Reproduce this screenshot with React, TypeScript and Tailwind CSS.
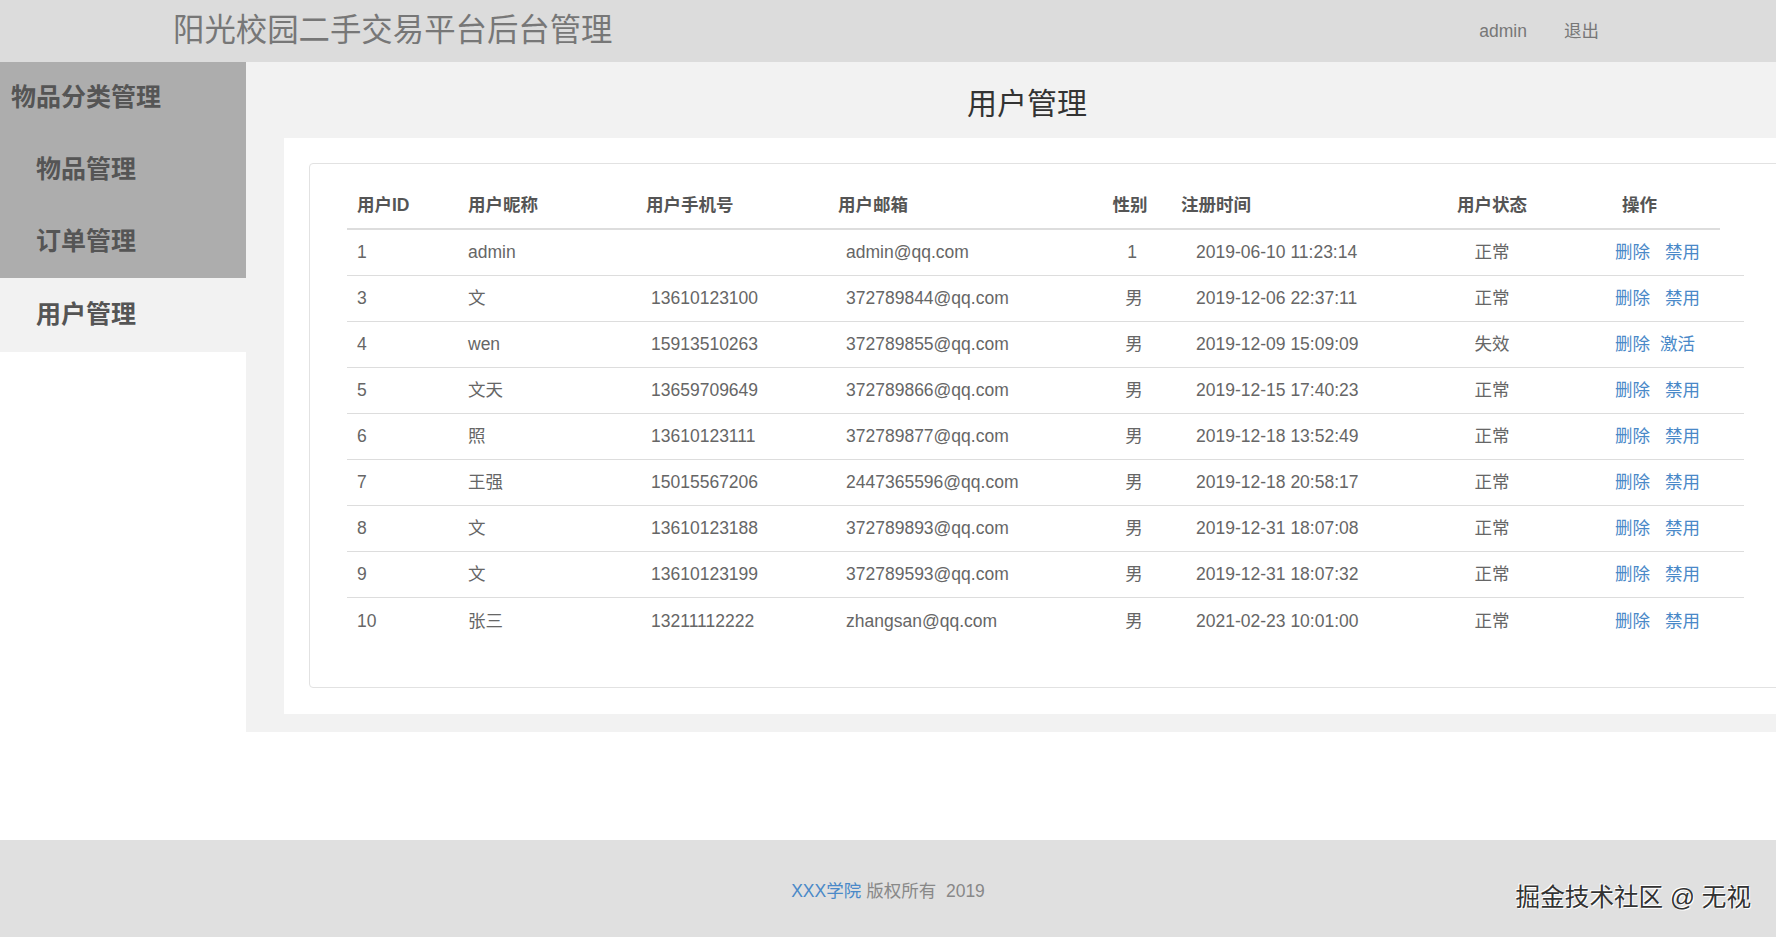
import React from 'react'

// Campus second-hand market admin: user management page.

type User = {
  id: string
  nick: string
  phone: string
  email: string
  gender: string
  created: string
  status: string
  action: string
}

const users: User[] = [
  { id: '1', nick: 'admin', phone: '', email: 'admin@qq.com', gender: '1', created: '2019-06-10 11:23:14', status: '正常', action: '禁用' },
  { id: '3', nick: '文', phone: '13610123100', email: '372789844@qq.com', gender: '男', created: '2019-12-06 22:37:11', status: '正常', action: '禁用' },
  { id: '4', nick: 'wen', phone: '15913510263', email: '372789855@qq.com', gender: '男', created: '2019-12-09 15:09:09', status: '失效', action: '激活' },
  { id: '5', nick: '文天', phone: '13659709649', email: '372789866@qq.com', gender: '男', created: '2019-12-15 17:40:23', status: '正常', action: '禁用' },
  { id: '6', nick: '照', phone: '13610123111', email: '372789877@qq.com', gender: '男', created: '2019-12-18 13:52:49', status: '正常', action: '禁用' },
  { id: '7', nick: '王强', phone: '15015567206', email: '2447365596@qq.com', gender: '男', created: '2019-12-18 20:58:17', status: '正常', action: '禁用' },
  { id: '8', nick: '文', phone: '13610123188', email: '372789893@qq.com', gender: '男', created: '2019-12-31 18:07:08', status: '正常', action: '禁用' },
  { id: '9', nick: '文', phone: '13610123199', email: '372789593@qq.com', gender: '男', created: '2019-12-31 18:07:32', status: '正常', action: '禁用' },
  { id: '10', nick: '张三', phone: '13211112222', email: 'zhangsan@qq.com', gender: '男', created: '2021-02-23 10:01:00', status: '正常', action: '禁用' },
]

const font = { fontFamily: '"Liberation Sans", "Noto Sans CJK SC", sans-serif' }

function Sidebar() {
  return (
    <aside className="flex w-[246px] shrink-0 flex-col bg-white">
      <div className="bg-[#adadad]">
        <div className="flex h-[72px] items-center pl-[11px] text-[25px] font-bold text-[#555]">物品分类管理</div>
        <div className="flex h-[72px] items-center pl-[36px] text-[25px] font-bold text-[#555]">物品管理</div>
        <div className="flex h-[72px] items-center pl-[36px] text-[25px] font-bold text-[#555]">订单管理</div>
      </div>
      <div className="flex h-[74px] items-center bg-[#f2f2f2] pl-[36px] text-[25px] font-bold text-[#555]">用户管理</div>
    </aside>
  )
}

function UserTable() {
  return (
    <div className="text-[17.5px]">
      {/* header row: its rule stops a little short of the body rows */}
      <div className="flex h-[49px] w-[1373px] items-center border-b-2 border-[#dddddd] pt-[1px] font-bold text-[#555]">
        <div className="w-[111px] pl-[10px]">用户ID</div>
        <div className="w-[178px] pl-[10px]">用户昵称</div>
        <div className="w-[192px] pl-[10px]">用户手机号</div>
        <div className="w-[262px] pl-[10px]">用户邮箱</div>
        <div className="w-[80px] text-center">性别</div>
        <div className="w-[230px] pl-[11px]">注册时间</div>
        <div className="w-[184px] text-center">用户状态</div>
        <div className="w-[136px] pl-[38px]">操作</div>
      </div>
      {users.map((u, i) => (
        <div
          key={u.id}
          className={
            'flex h-[46px] w-[1397px] items-center text-[#666] ' +
            (i < users.length - 1 ? 'border-b border-[#dddddd]' : '')
          }
        >
          <div className="w-[111px] pl-[10px]">{u.id}</div>
          <div className="w-[178px] pl-[10px]">{u.nick}</div>
          <div className="w-[192px] pl-[15px]">{u.phone}</div>
          <div className="w-[262px] pl-[18px]">{u.email}</div>
          <div className={'w-[80px] text-center ' + (u.gender === '1' ? 'pl-[4px]' : 'pl-[8px]')}>{u.gender}</div>
          <div className="w-[230px] pl-[26px]">{u.created}</div>
          <div className="w-[184px] text-center">{u.status}</div>
          <div className="flex w-[160px] pl-[31px] text-[#4a89c8]">
            <span>删除</span>
            <span className={u.action === '激活' ? 'ml-[10px]' : 'ml-[15px]'}>{u.action}</span>
          </div>
        </div>
      ))}
    </div>
  )
}

export default function App() {
  return (
    <div className="min-h-[937px] overflow-hidden bg-white" style={font}>
      <header className="flex h-[62px] items-center bg-[#dcdcdc]">
        <div className="pl-[173px] text-[31.4px] text-[#777]">阳光校园二手交易平台后台管理</div>
        <div className="ml-auto flex items-center pr-[177px] text-[17.5px] text-[#777]">
          <span>admin</span>
          <span className="ml-[37px]">退出</span>
        </div>
      </header>

      <div className="flex h-[670px]">
        <Sidebar />
        <main className="flex min-w-0 flex-1 flex-col bg-[#f2f2f2] pl-[38px]">
          <div className="flex h-[76px] items-center justify-center pr-[6px] pt-[6px] text-[30px] text-[#333]">
            用户管理
          </div>
          <div className="h-[576px] bg-white pl-[25px] pt-[25px]">
            <div className="h-[525px] w-[1600px] rounded-[4px] border border-[#e2e2e2] pl-[37px] pt-[17px]">
              <UserTable />
            </div>
          </div>
        </main>
      </div>

      <div className="h-[108px]" />

      <footer className="relative flex h-[97px] items-center justify-center bg-[#e0e0e0] pt-[6px] text-[17.5px]">
        <span className="text-[#4a89c8]">XXX学院</span>
        <span className="ml-[5px] text-[#888]">版权所有&nbsp;&nbsp;2019</span>
        <span
          className="absolute right-[25px] top-[40px] text-[24.6px] text-[#333]"
          style={{ textShadow: '1px 1px 0 #fff, -1px -1px 0 #fff' }}
        >
          掘金技术社区 @ 无视
        </span>
      </footer>
    </div>
  )
}
